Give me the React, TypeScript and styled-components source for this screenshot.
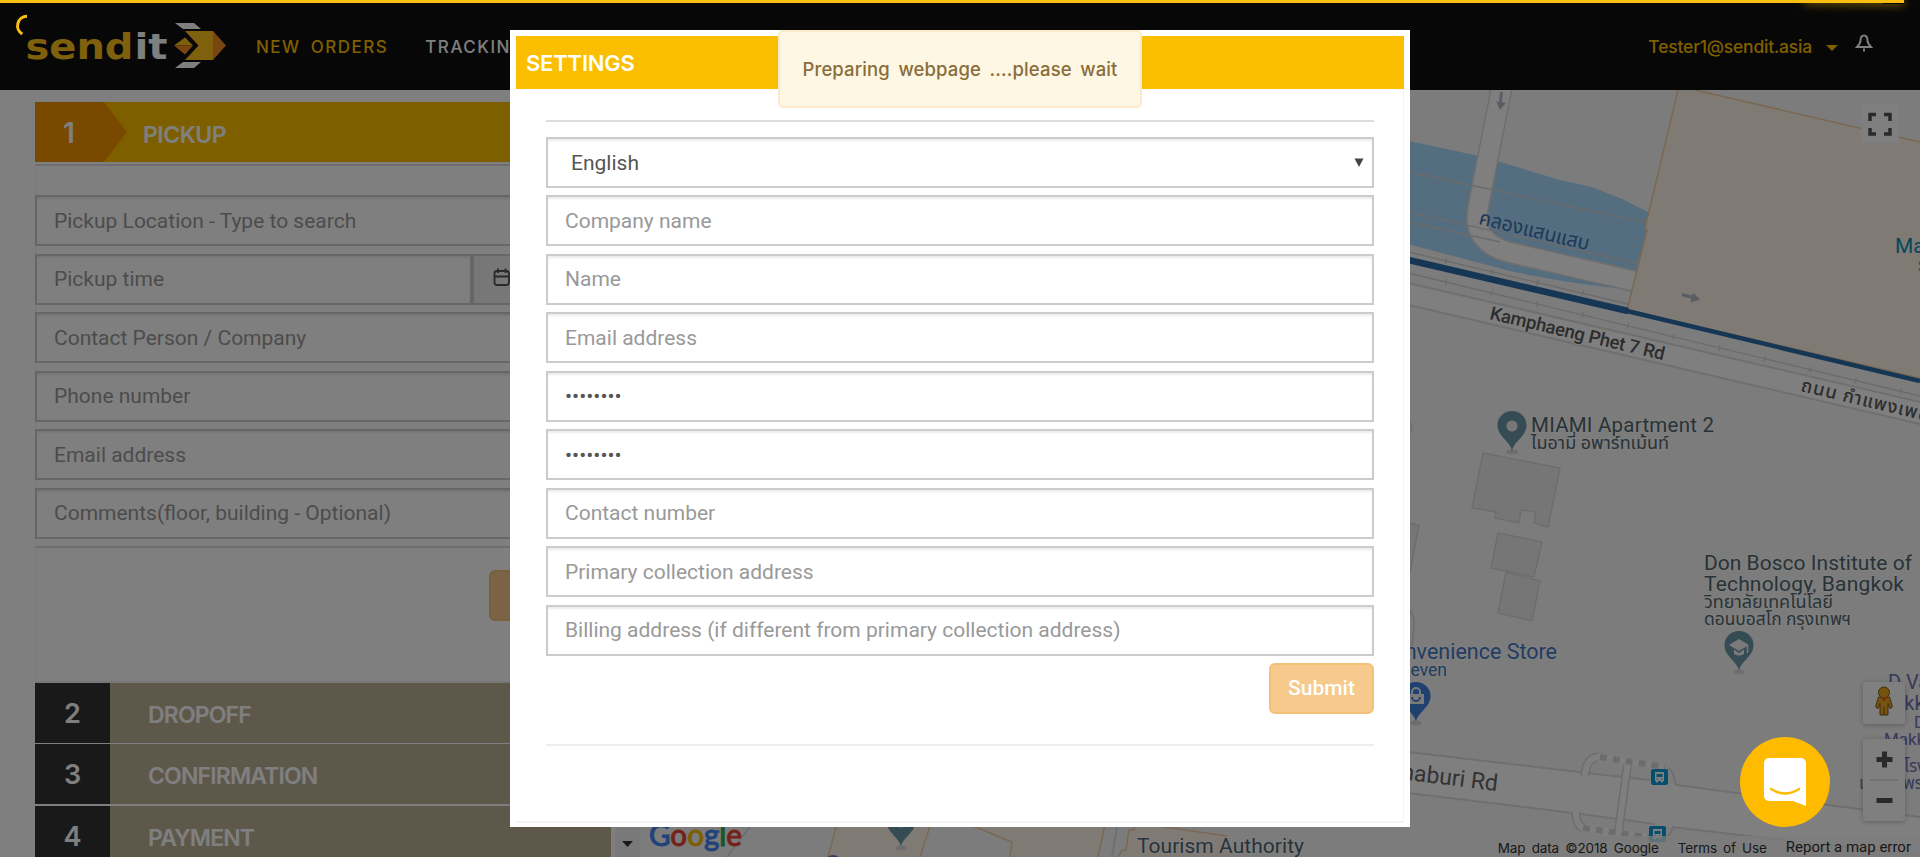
import React from "react";
import styled, { createGlobalStyle } from "styled-components";

const GlobalStyle = createGlobalStyle`
  * { box-sizing: border-box; }
  body { margin: 0; overflow: hidden; font-family: Roboto, "Liberation Sans", sans-serif; background: #fff; }
`;

const display = `Inter, "Open Sans", sans-serif`;

const Page = styled.div`
  width: 1920px;
  height: 857px;
  display: flex;
  flex-direction: column;
  overflow: hidden;
`;

const TopBar = styled.header`
  flex: none;
  height: 90px;
  display: flex;
  align-items: center;
  background: #0e0e0e;
  padding: 0 47px 0 24px;
`;

const Nav = styled.nav`
  display: flex;
  gap: 37px;
  margin: 4px 0 0 26px;
  flex: 1;
`;

const NavLink = styled.span<{ $active?: boolean }>`
  font: 500 17px/24px ${display};
  letter-spacing: 1.5px;
  word-spacing: 4px;
  white-space: nowrap;
  color: ${(p) => (p.$active ? "#ffbe00" : "#fff")};
`;

const Account = styled.div`
  display: flex;
  align-items: center;
  margin-top: 4px;
  font: 500 17.5px/24px ${display};
  letter-spacing: -0.2px;
  color: #ffbe00;
`;

const Caret = styled.span`
  border: 6px solid transparent;
  border-top-color: currentColor;
  border-bottom: 0;
  margin: 2px 0 0 14px;
`;

const BellIcon = styled.svg`
  margin: -8px 0 0 17px;
`;

const Body = styled.main`
  flex: 1;
  min-height: 0;
  display: flex;
`;

const Sidebar = styled.section`
  width: 611px;
  flex: none;
  padding: 12px 0 0 35px;
`;

const PickupHead = styled.div`
  height: 60px;
  display: flex;
  background: #fbbe00;
`;

const PickupNumber = styled.div`
  width: 92px;
  padding: 0 0 0 28px;
  background: #f39200;
  color: #fff;
  font: 600 28px/63px ${display};
  clip-path: polygon(0 0, 69px 0, 100% 50%, 69px 100%, 0 100%);
`;

const HeadTitle = styled.div`
  padding-left: 16px;
  color: #fff;
  font: 600 23px/66px ${display};
  letter-spacing: -0.5px;
`;

const PickupCard = styled.div`
  height: 519px;
  margin-top: 2px;
  border-top: 2px solid #ddd;
  border-left: 1px solid #f0f0f0;
  border-bottom: 2px solid #eee;
`;

const FieldStack = styled.div<{ $top: number }>`
  display: grid;
  row-gap: 7.48px;
  margin: ${(p) => p.$top}px 0 0;
`;

const Input = styled.input`
  width: 100%;
  height: 51px;
  min-width: 0;
  border: 2px solid #ccc;
  border-radius: 0;
  background: #fff;
  padding: 0 17px;
  box-shadow: inset 0 2px 2px rgba(0, 0, 0, 0.075);
  font: 400 21px Roboto, sans-serif;
  color: #555;
  outline: none;
  &::placeholder { color: #999; opacity: 1; }
`;

const CardFields = styled(FieldStack)`
  margin-left: -1px;
`;

const TimeRow = styled.div`
  display: flex;
  & > input { flex: 0 0 437px; }
`;

const CalendarAddon = styled.div`
  flex: 1;
  border: 2px solid #ccc;
  background: #eee;
  padding: 12px 0 0 19px;
`;

const CardFooter = styled.div`
  border-top: 2px solid #ddd;
  margin-top: 7px;
  padding: 22px 17px 0 0;
  display: flex;
  justify-content: flex-end;
`;

const Button = styled.button`
  width: 105px;
  height: 51px;
  border: 2px solid #f3c078;
  border-radius: 6px;
  background: #f6c98c;
  color: #fff;
  padding: 0;
  font: 500 21px Roboto, sans-serif;
`;

const StepRow = styled.div<{ $gap: number }>`
  height: 60px;
  margin-bottom: ${(p) => p.$gap}px;
  display: flex;
  background: #bdb097;
`;

const StepNumber = styled.div`
  width: 75px;
  background: #333;
  color: #fff;
  text-align: center;
  font: 600 27px/62px ${display};
`;

const StepTitle = styled.div`
  padding-left: 38px;
  color: #fff;
  font: 600 23px/65px ${display};
  letter-spacing: -0.85px;
`;

const MapPane = styled.section`
  position: relative;
  flex: 1;
  background: #f8f8f8;
`;

const MapButton = styled.div<{ $x: number; $y: number; $w: number; $h: number; $flat?: boolean }>`
  position: absolute;
  left: ${(p) => p.$x}px;
  top: ${(p) => p.$y}px;
  width: ${(p) => p.$w}px;
  height: ${(p) => p.$h}px;
  background: #fff;
  border-radius: ${(p) => (p.$flat ? 0 : 3)}px;
  box-shadow: ${(p) => (p.$flat ? "none" : "0 1px 5px rgba(0, 0, 0, 0.25)")};
  svg { display: block; }
`;

const MapCredits = styled.div`
  position: absolute;
  right: 0;
  bottom: 0;
  height: 21px;
  padding: 0 9px 0 8px;
  display: flex;
  gap: 19px;
  background: rgba(250, 250, 250, 0.75);
  color: #333;
  white-space: nowrap;
`;

const Credit = styled.span<{ $plain?: boolean }>`
  font-family: ${(p) => (p.$plain ? "Roboto" : "Inter")}, sans-serif;
  font-size: ${(p) => (p.$plain ? 15 : 13.5)}px;
  line-height: ${(p) => (p.$plain ? 22 : 25)}px;
  word-spacing: ${(p) => (p.$plain ? 0 : 2.5)}px;
  letter-spacing: ${(p) => (p.$plain ? 0 : -0.12)}px;
`;

const Shade = styled.div`
  position: fixed;
  inset: 0;
  background: rgba(0, 0, 0, 0.5);
  display: flex;
  justify-content: center;
  align-items: flex-start;
  padding-top: 30px;
`;

const Dialog = styled.div`
  width: 900px;
  height: 797px;
  background: #fff;
  padding: 6px;
`;

const DialogCard = styled.div`
  height: 787px;
  border-right: 1px solid #f4f4f4;
  border-bottom: 2px solid #f4f4f4;
`;

const DialogTitle = styled.div`
  height: 53px;
  padding-left: 10px;
  margin-right: -1px;
  background: #fbbe00;
  color: #fff;
  font: 600 22px/54px ${display};
  letter-spacing: -0.2px;
`;

const DialogBody = styled.div`
  margin: 31px 29px 0 30px;
  border-top: 2px solid #ddd;
`;

const SelectBox = styled.div`
  height: 51px;
  display: flex;
  align-items: center;
  justify-content: space-between;
  border: 2px solid #ccc;
  box-shadow: inset 0 2px 2px rgba(0, 0, 0, 0.075);
  padding: 0 8px 0 23px;
  font-size: 21px;
  color: #555;
`;

const Actions = styled.div`
  display: flex;
  justify-content: flex-end;
  padding: 7.2px 0 30px;
  border-bottom: 2px solid #eee;
`;

const Toast = styled.div`
  position: fixed;
  left: 778px;
  top: 30px;
  width: 364px;
  height: 78px;
  background: #fef7e3;
  border: 2px solid #fbeacb;
  border-radius: 5px;
  color: #8a6d3b;
  text-align: center;
  white-space: nowrap;
  font: 500 18.5px/75px ${display};
  letter-spacing: 0.12px;
  word-spacing: 3.5px;
`;

const Progress = styled.div`
  position: fixed;
  left: 0;
  top: 0;
  width: 1904px;
  height: 3px;
  background: #fbbe12;
  &::after {
    content: "";
    position: absolute;
    right: 0;
    top: 0;
    width: 100px;
    height: 3px;
    box-shadow: 0 0 10px #fbbe12;
    transform: rotate(1deg);
  }
`;

const Spinner = styled.svg`
  position: fixed;
  left: 9px;
  top: 10px;
`;

const Messenger = styled.div`
  position: fixed;
  left: 1740px;
  top: 737px;
  width: 90px;
  height: 90px;
  border-radius: 50%;
  background: #ffbb00;
`;

function Logo() {
  return (
    <svg width="206" height="60" viewBox="24 15 206 60">
      <g fontFamily="DejaVu Sans" fontWeight="700" fontSize="35">
        <text x="25.5" y="59" textLength="108" lengthAdjust="spacingAndGlyphs" fill="#ffc01a">send</text>
        <text x="134.5" y="59" textLength="33" lengthAdjust="spacingAndGlyphs" fill="#fff">it</text>
      </g>
      <path d="M175 23h19l7 6h-18zM183 62h18l-7 6h-19z" fill="#fff" />
      <path d="M185 31h28v29h-28l13.5-14.5z" fill="#ffc01a" />
      <path d="M213 31l13 14.500-13 14.500z" fill="#f28c22" />
      <path d="M174 45.500l11-8 8 8z" fill="#ffc01a" />
      <path d="M174 45.500l11 9 8-9z" fill="#f28c22" />
    </svg>
  );
}

function Pin({ x, y, color, children }: { x: number; y: number; color: string; children?: React.ReactNode }) {
  return (
    <g transform={`translate(${x} ${y})`}>
      <ellipse cy="26" rx="6" ry="2.500" fill="#ddd" />
      <path d="M0 25C-1.500 15-14.500 11-14.500-1A14.500 14 0 0 1 14.500-1C14.500 11 1.500 15 0 25z" fill={color} />
      {children ?? <circle r="5.500" fill="#eee" />}
    </g>
  );
}

function BusStop({ x, y }: { x: number; y: number }) {
  return (
    <g transform={`translate(${x} ${y})`}>
      <rect width="17" height="16" rx="2" fill="#0a9fd8" />
      <path d="M4 3h9v9h-1v1.500h-2V12H7v1.500H5V12H4z" fill="#fff" />
      <path d="M5.500 5h6v3h-6zM5.500 9.500h1.500v1h-1.500zM10 9.500h1.500v1H10z" fill="#0a9fd8" />
    </g>
  );
}

function City() {
  const halo = { stroke: "#fff", strokeWidth: 2, paintOrder: "stroke" } as const;
  return (
    <svg width="1309" height="767" viewBox="611 90 1309 767" style={{ display: "block" }} fontFamily='Roboto, "Noto Sans Thai", "Noto Sans", sans-serif'>
      <rect x="611" y="90" width="1309" height="767" fill="#f8f8f8" />
      <path d="M1400 139L1479 156 1507 164 1560 180 1592 187 1622 199 1650 213 1636 282 1615 288Q1560 282 1510 271L1400 242z" fill="#aadcff" />
      <path d="M1400 283L1920 402V424L1400 303z" fill="#fff" />
      <g fill="none">
        <path d="M1502 86L1478 208Q1472 242 1508 252L1638 282" stroke="#dcdcdc" strokeWidth="22" />
        <path d="M1502 86L1478 208Q1472 242 1508 252L1638 282" stroke="#fff" strokeWidth="19" />
        <g stroke="#d6d6d6" strokeWidth="1.300">
          <path d="M1400 170L1647 223M1400 210L1640 264M1400 220L1500 242M1400 250L1628 304M1400 271L1920 396" />
          <path d="M1400 250L1628 304M1400 271L1920 396" strokeDasharray="1.300 45.500" strokeWidth="6" />
        </g>
        <path d="M1400 281L1920 402M1400 303L1920 424" stroke="#dedede" strokeWidth="2" />
      </g>
      <path d="M1678 90H1695L1920 142V379L1627 310 1647 229 1645 228z" fill="#fff6e8" />
      <path d="M1678 90L1645 228 1647 230 1627 310 1920 378M1695 90L1920 142" fill="none" stroke="#f5cfa5" strokeWidth="1.500" />
      <path d="M1400 258L1628 311" stroke="#2a6ca8" strokeWidth="6.500" />
      <path d="M1627 311L1920 381" stroke="#2a6ca8" strokeWidth="4.500" />
      <g fill="#b9b9c8">
        <path d="M1500 92l3 0-1 10 4 1-6 7-4-9 3 1z" />
        <path d="M1682 293l10 2.500 1-3 7 7-9 3 0-4-9-2z" />
      </g>
      <g fill="#ececec" stroke="#dadada" strokeWidth="1.400">
        <path d="M1483 453l77 15-12 59-14-4 2-11-15-2-2 13-24-5 1-6-24-4z" />
        <path d="M1498 533l44 9-8 35-43-9z" />
        <path d="M1506 572l34 9-8 40-34-8z" />
        <path d="M1400 521l19 4-9 47-10-2z" />
      </g>
      <path d="M1406 608q8 4 8 15l-2 24M1405 419q11 6 4 15" fill="none" stroke="#dedede" strokeWidth="2" />

      <path d="M1400 751L1587 773 1740 793 1920 817V855L1800 842 1670 827 1400 792z" fill="#fff" />
      <path d="M1400 751L1587 773 1650 780M1676 785L1920 817M1400 792L1573 813 1655 824M1672 827L1800 842 1920 855" fill="none" stroke="#dedede" strokeWidth="2" />
      <g fill="none">
        <path d="M1628 761L1618 835M1585 776Q1586 758 1598 757M1576 812Q1576 826 1584 828" stroke="#dadada" strokeWidth="9" />
        <path d="M1628 761L1618 835M1585 776Q1586 758 1598 757M1576 812Q1576 826 1584 828" stroke="#fff" strokeWidth="6" />
        <path d="M1598 757L1665 767M1581 828L1655 838" stroke="#fff" strokeWidth="7" />
        <path d="M1600 757L1665 767M1583 828L1655 838" stroke="#d8d8d8" strokeWidth="6" strokeDasharray="7 6" />
        <path d="M1668 768q5 2 8 17M1665 838q5-2 8-11" stroke="#dedede" strokeWidth="2" />
      </g>
      <BusStop x={1651} y={769} />
      <BusStop x={1649} y={826} />

      <g>
        <path d="M838 820L828 857H920L932 820zM958 820L1012 842 1010 857H1098L1106 820zM1130 825L1122 857H1230L1227 836 1160 827z" fill="#fff6e8" />
        <path d="M838 820L828 857M932 820L920 857M958 820L1012 842 1010 857M1106 820L1098 857M1118 857L1122 850H1126L1129 830H1134L1135 825M1158 826L1227 836" fill="none" stroke="#f5cfa5" strokeWidth="1.500" />
        <path d="M755 820L727 857M1118 820L1112 857" stroke="#dedede" strokeWidth="2" />
      </g>
      <rect x="611" y="820" width="4" height="37" fill="#fff" />
      <rect x="615" y="820" width="25" height="37" fill="#f2f2f2" />
      <path d="M622 841h11l-5.500 6z" fill="#333" />
      <text y="846" fontFamily="Lato" fontWeight="500" fontSize="30" x="649" textLength="93" lengthAdjust="spacingAndGlyphs" strokeWidth="0.800">
        <tspan fill="#4285f4" stroke="#4285f4">G</tspan><tspan fill="#ea4335" stroke="#ea4335">o</tspan><tspan fill="#fbbc05" stroke="#fbbc05">o</tspan><tspan fill="#4285f4" stroke="#4285f4">g</tspan><tspan fill="#34a853" stroke="#34a853">l</tspan><tspan fill="#ea4335" stroke="#ea4335">e</tspan>
      </text>
      <Pin x={901} y={822} color="#6d98a8" />
      <circle cx="833" cy="864" r="9" fill="#6c7cc8" />
      <text x="866" y="871" fontSize="19" fill="#555">Building The</text>
      <text {...halo} x="1137" y="853" fontSize="21" textLength="167" fill="#52666e">Tourism Authority</text>

      <text transform="translate(1478 224) rotate(13.500)" fontSize="20" textLength="113" lengthAdjust="spacingAndGlyphs" fill="#416fae">คลองแสนแสบ</text>
      <text {...halo} transform="translate(1489 319) rotate(13.300)" fontSize="18.500" fontWeight="500" textLength="179" fill="#5a5a5a">Kamphaeng Phet 7 Rd</text>
      <text {...halo} transform="translate(1800 391) rotate(13.300)" fontSize="18.500" fontWeight="500" textLength="158" fill="#5a5a5a">ถนน กำแพงเพชร 7</text>
      <Pin x={1512} y={426} color="#6d98a8" />
      <g {...halo} fill="#52666e">
        <text x="1531" y="432" fontSize="20.500" textLength="183">MIAMI Apartment 2</text>
        <text x="1531" y="449" fontSize="17" textLength="138" lengthAdjust="spacingAndGlyphs">ไมอามี่ อพาร์ทเม้นท์</text>
        <text x="1704" y="570" fontSize="21" textLength="208">Don Bosco Institute of</text>
        <text x="1704" y="591" fontSize="21" textLength="200">Technology, Bangkok</text>
        <text x="1704" y="608" fontSize="17" textLength="129" lengthAdjust="spacingAndGlyphs">วิทยาลัยเทคโนโลยี</text>
        <text x="1704" y="625" fontSize="17" textLength="147" lengthAdjust="spacingAndGlyphs">ดอนบอสโก กรุงเทพฯ</text>
      </g>
      <Pin x={1739} y={646} color="#6d98a8">
        <path d="M-10 -1L0 -7 10 -1 0 5zM-5 3.500V8Q0 11 5 8V3.500L0 7z" fill="#f4f4f4" />
        <path d="M8.500 0V7" stroke="#f4f4f4" strokeWidth="1.500" />
      </Pin>
      <g fill="#4378c4" textAnchor="end">
        <text {...halo} x="1557" y="658.5" fontSize="21.500">Convenience Store</text>
        <text {...halo} x="1447" y="676" fontSize="17.500">7-Eleven</text>
      </g>
      <Pin x={1416} y={697} color="#3f82e0">
        <path d="M-8 -3H8V7H-8z" fill="#f4f4f4" />
        <path d="M-4 -3V-5a4 4 0 0 1 8 0V-3" fill="none" stroke="#f4f4f4" strokeWidth="2" />
        <path d="M-4 0a4 4 0 0 0 8 0" fill="none" stroke="#3f82e0" strokeWidth="1.800" />
      </Pin>
      <text {...halo} transform="translate(1497 791) rotate(7)" textAnchor="end" fontSize="23" fill="#666">Phetchaburi Rd</text>
      <g fill="#0e8cbc">
        <text x="1895" y="253" fontSize="21">Makkasan</text>
        <text x="1918" y="272" fontSize="17">Station</text>
      </g>
      <g fill="#6f73b4">
        <text x="1888" y="689" fontSize="20">D Varee</text>
        <text x="1876" y="710" fontSize="20">Makkasan</text>
        <text x="1914" y="728" fontSize="17">D Varee</text>
        <text x="1884" y="745" fontSize="17">Makkasan</text>
        <text x="1904" y="772" fontSize="17">โรงแรม</text>
        <text x="1859" y="789" fontSize="17">เ</text>
        <text x="1903" y="789" fontSize="17">พร</text>
      </g>
    </svg>
  );
}

const steps = [
  { n: 2, title: "DROPOFF", gap: 1 },
  { n: 3, title: "CONFIRMATION", gap: 2 },
  { n: 4, title: "PAYMENT", gap: 0 },
];

export default function App() {
  return (
    <>
      <GlobalStyle />
      <Page>
        <TopBar>
          <Logo />
          <Nav>
            <NavLink $active>NEW ORDERS</NavLink>
            <NavLink>TRACKING</NavLink>
          </Nav>
          <Account>
            Tester1@sendit.asia
            <Caret />
            <BellIcon width="18" height="18" viewBox="0 0 18 18" fill="none" stroke="#fff" strokeWidth="2">
              <path d="M9 1.500C6 1.500 5.500 4 5.500 6.500S4.500 10 2 13h14c-2.500-3-3.500-4-3.500-6.500S12 1.500 9 1.500z" />
              <path d="M8 16h2" strokeWidth="3" />
            </BellIcon>
          </Account>
        </TopBar>
        <Body>
          <Sidebar>
            <PickupHead>
              <PickupNumber>1</PickupNumber>
              <HeadTitle>PICKUP</HeadTitle>
            </PickupHead>
            <PickupCard>
              <CardFields $top={29.45}>
                <Input placeholder="Pickup Location - Type to search" />
                <TimeRow>
                  <Input placeholder="Pickup time" />
                  <CalendarAddon>
                    <svg width="18" height="19" viewBox="0 0 18 19" fill="none" stroke="#555" strokeWidth="1.900">
                      <rect x="1.500" y="3" width="14.500" height="14" rx="2.500" />
                      <path d="M1.500 8.500H16M5 0.500v4.500M12.500 0.500v4.500" />
                    </svg>
                  </CalendarAddon>
                </TimeRow>
                <Input placeholder="Contact Person / Company" />
                <Input placeholder="Phone number" />
                <Input placeholder="Email address" />
                <Input placeholder="Comments(floor, building - Optional)" />
              </CardFields>
              <CardFooter>
                <Button>Next</Button>
              </CardFooter>
            </PickupCard>
            {steps.map((s) => (
              <StepRow key={s.n} $gap={s.gap}>
                <StepNumber>{s.n}</StepNumber>
                <StepTitle>{s.title}</StepTitle>
              </StepRow>
            ))}
          </Sidebar>
          <MapPane>
            <City />
            <MapButton $x={1250} $y={15} $w={38} $h={38} $flat>
              <svg width="38" height="38" fill="none" stroke="#555" strokeWidth="3.500">
                <path d="M9 16V9.500H15M23 9.500H29V16M29 23V29H23M15 29H9V23" />
              </svg>
            </MapButton>
            <MapButton $x={1252} $y={592} $w={42} $h={42}>
              <svg width="42" height="42">
                <g fill="#efa81b" stroke="#7d5a1c" strokeWidth="1">
                  <path d="M15.500 15h11l3 10-2.500 1.500-2-5V33H17V21.500l-2 5-2.500-1.500z" />
                  <circle cx="21" cy="10.500" r="5.500" />
                </g>
                <path d="M17.500 15h7L21 20z" fill="#e5661e" />
                <path d="M21 25v8" stroke="#7d5a1c" />
              </svg>
            </MapButton>
            <MapButton $x={1252} $y={649} $w={42} $h={82}>
              <svg width="42" height="82" fill="none" stroke="#555" strokeWidth="5">
                <path d="M13.500 20.500h16M21.500 12.500v16M13.500 61.500h16" />
                <path d="M7 41h28" stroke="#ddd" strokeWidth="1.500" />
              </svg>
            </MapButton>
            <MapCredits>
              <Credit>Map data ©2018 Google</Credit>
              <Credit>Terms of Use</Credit>
              <Credit $plain>Report a map error</Credit>
            </MapCredits>
          </MapPane>
        </Body>
      </Page>

      <Shade>
        <Dialog>
          <DialogCard>
            <DialogTitle>SETTINGS</DialogTitle>
            <DialogBody>
              <FieldStack $top={15}>
                <SelectBox>
                  English
                  <svg width="10" height="10"><path d="M.5 .5h9L5 9z" fill="#444" /></svg>
                </SelectBox>
                <Input placeholder="Company name" />
                <Input placeholder="Name" />
                <Input placeholder="Email address" />
                <Input type="password" defaultValue="password" />
                <Input type="password" defaultValue="password" />
                <Input placeholder="Contact number" />
                <Input placeholder="Primary collection address" />
                <Input placeholder="Billing address (if different from primary collection address)" />
              </FieldStack>
              <Actions>
                <Button>Submit</Button>
              </Actions>
            </DialogBody>
          </DialogCard>
        </Dialog>
      </Shade>

      <Toast>Preparing webpage ....please wait</Toast>
      <Progress />
      <Spinner width="24" height="30" viewBox="10 10 24 30" fill="none" stroke="#fbbe12" strokeWidth="3">
        <path d="M28 16.300A9.500 9.500 0 0 0 23.300 34" />
      </Spinner>
      <Messenger>
        <svg width="90" height="90">
          <path d="M29 21h32a5 5 0 0 1 5 5v43l-13-5H29a5 5 0 0 1-5-5V26a5 5 0 0 1 5-5z" fill="#fff" />
          <path d="M31 52q14 9 28 0" fill="none" stroke="#ffbb00" strokeWidth="2.400" strokeLinecap="round" />
        </svg>
      </Messenger>
    </>
  );
}
